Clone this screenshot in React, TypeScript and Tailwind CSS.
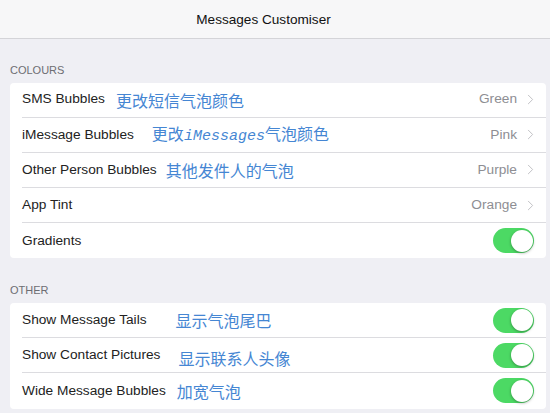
import { ChevronRight } from 'lucide-react'

const cn = '"Noto Sans CJK SC", sans-serif'

const Toggle = () => (
  <div className="w-[41px] h-[25px] rounded-full bg-[#4cd964] flex items-center justify-end p-[1.5px]">
    <div className="w-[22px] h-[22px] rounded-full bg-white shadow-[0_1px_3px_rgba(0,0,0,0.35)]" />
  </div>
)

type RowProps = {
  label: string
  note?: React.ReactNode
  noteX?: string
  value?: string
  toggle?: boolean
  last?: boolean
}

const Row = ({ label, note, noteX, value, toggle, last }: RowProps) => (
  <div className="pl-3 flex">
    <div className={`flex-1 h-[35.2px] flex items-center pr-3 ${last ? '' : 'border-b border-[#dcdce0]'}`}>
      <span className="text-[13.7px] text-[#222]">{label}</span>
      {note && (
        <span className={`text-[16px] text-[#4586d3] ${noteX}`} style={{ fontFamily: cn }}>
          {note}
        </span>
      )}
      <div className="grow" />
      {value && (
        <div className="flex items-center gap-[5px] text-[#8e8e93] text-[13.7px]">
          {value}
          <ChevronRight size={17} strokeWidth={1.3} className="text-[#bcbcc1] -mr-[5px]" />
        </div>
      )}
      {toggle && <Toggle />}
    </div>
  </div>
)

export default function App() {
  return (
    <div className="w-[550px] h-[413px] overflow-hidden bg-[#efeff4] font-['Liberation_Sans',sans-serif]">
      <div className="h-[39px] bg-[#f7f7f8] border-b border-[#d4d4d8] flex items-center justify-center pr-[23px] pt-[3px]">
        <h1 className="text-[13.6px] text-[#111]">Messages Customiser</h1>
      </div>
      <div className="pl-[10px] pr-[4px]">
        <div className="pt-[23px] pb-[4px] text-[11px] text-[#6d6d72]">COLOURS</div>
        <div className="bg-white rounded-[4px]">
          <Row label="SMS Bubbles" note="更改短信气泡颜色" noteX="ml-[11px]" value="Green" />
          <Row
            label="iMessage Bubbles"
            note={
              <>
                更改
                <span className="italic font-['Liberation_Mono',monospace] text-[15px]">iMessages</span>
                气泡颜色
              </>
            }
            noteX="ml-[18px]"
            value="Pink"
          />
          <Row label="Other Person Bubbles" note="其他发件人的气泡" noteX="ml-[9px]" value="Purple" />
          <Row label="App Tint" value="Orange" />
          <Row label="Gradients" toggle last />
        </div>
        <div className="pt-[24px] pb-[4px] text-[11px] text-[#6d6d72]">OTHER</div>
        <div className="bg-white rounded-[4px]">
          <Row label="Show Message Tails" note="显示气泡尾巴" noteX="ml-[29px]" toggle />
          <Row label="Show Contact Pictures" note="显示联系人头像" noteX="ml-[18px] mt-[5px]" toggle />
          <Row label="Wide Message Bubbles" note="加宽气泡" noteX="ml-[11px]" toggle last />
        </div>
      </div>
    </div>
  )
}
